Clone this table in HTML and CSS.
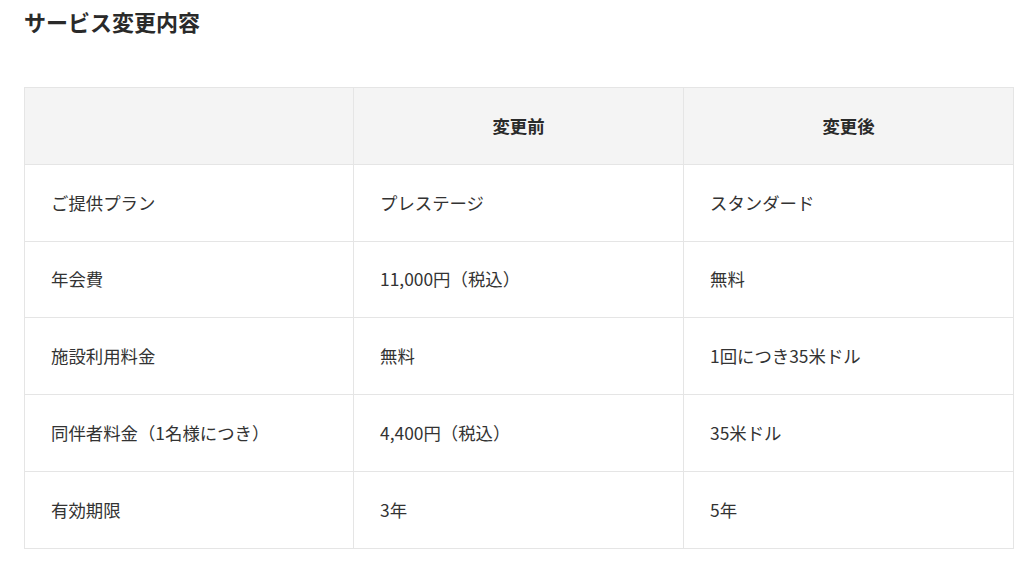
FILE: index.html
```html
<!DOCTYPE html>
<html lang="ja">
<head>
<meta charset="utf-8">
<link rel="stylesheet" href="styles.css">
</head>
<body>
<main class="page">
  <h2 class="title">サービス変更内容</h2>
  <table class="compare">
    <colgroup>
      <col class="col-label">
      <col>
      <col>
    </colgroup>
    <thead>
      <tr>
        <th></th>
        <th>変更前</th>
        <th>変更後</th>
      </tr>
    </thead>
    <tbody>
      <tr><td>ご提供プラン</td><td>プレステージ</td><td>スタンダード</td></tr>
      <tr><td>年会費</td><td>11,000円（税込）</td><td>無料</td></tr>
      <tr><td>施設利用料金</td><td>無料</td><td>1回につき35米ドル</td></tr>
      <tr><td>同伴者料金（1名様につき）</td><td>4,400円（税込）</td><td>35米ドル</td></tr>
      <tr><td>有効期限</td><td>3年</td><td>5年</td></tr>
    </tbody>
  </table>
</main>
</body>
</html>
```
FILE: styles.css
```css
html, body {
  margin: 0;
  padding: 0;
  background: #ffffff;
}
body {
  font-family: "Noto Sans CJK JP", "Noto Sans", sans-serif;
  color: #333333;
}
.page {
  padding: 0 11px 0 24px;
}
.title {
  margin: 0;
  padding-top: 6px;
  font-size: 22px;
  line-height: 30px;
  font-weight: 700;
  color: #2a2a2a;
}
.compare {
  margin-top: 51px;
  width: 990px;
  border-collapse: collapse;
  table-layout: fixed;
  font-size: 17.4px;
}
.col-label {
  width: 329px;
}
.compare th,
.compare td {
  border: 1px solid #e5e5e5;
  height: 75.8px;
  padding: 0 0 0 26px;
  vertical-align: middle;
  text-align: left;
  line-height: 24px;
}
.compare th {
  background: #f4f4f4;
  font-weight: 700;
  text-align: center;
  padding: 0;
  color: #2a2a2a;
}
```
